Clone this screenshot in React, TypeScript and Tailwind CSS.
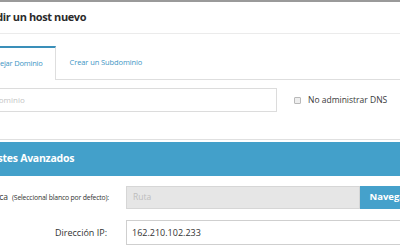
import React from 'react';

const font = { fontFamily: '"Open Sans", "Liberation Sans", sans-serif' };

export default function App() {
  return (
    <div className="w-[400px] h-[250px] overflow-hidden bg-white" style={font}>
      <div className="-ml-[40px] w-[480px] border-t-2 border-[#9a9a9a]">
        {/* Modal header */}
        <div className="h-[32px] flex items-center pl-[16px] border-b border-[#ebebeb]">
          <h1 className="text-[11px] font-bold text-[#2b2b2b] tracking-[-0.4px]">Añadir un host nuevo</h1>
        </div>

        {/* Tabs */}
        <div className="pt-[12px]">
          <div className="flex pl-[12px] border-b border-[#dedede] h-[34px]">
            <div className="-mb-px h-[34px] px-[12px] flex items-center bg-white border-x border-[#dedede] border-t-2 border-t-[#3a8fb9] text-[7.5px] tracking-[-0.2px] text-[#3d95c4]">
              Manejar Dominio
            </div>
            <div className="h-[33px] px-[14px] flex items-center text-[7.5px] tracking-[-0.1px] text-[#3d95c4]">
              Crear un Subdominio
            </div>
          </div>
        </div>

        {/* Domain row */}
        <div className="mt-[8px] flex items-center">
          <div className="ml-[20px] w-[297px] h-[24px] border border-[#dcdcdc] flex items-center pl-[12px] text-[8px] text-[#c4c4c4]">
            Dominio
          </div>
          <label className="ml-[17px] flex items-center gap-[7px] text-[8.5px] text-[#3a3a3a]">
            <span className="w-[7px] h-[7px] border border-[#b9b9b9] bg-[#eeeeee] rounded-[1px]" />
            No administrar DNS
          </label>
        </div>

        {/* Advanced settings */}
        <div className="mt-[27px] border-t border-[#e0e0e0] pt-[2px]">
          <div className="h-[34px] bg-[#43a0ca] flex items-center pl-[21px]">
            <h2 className="text-[10.5px] font-bold text-white tracking-tight">Ajustes Avanzados</h2>
          </div>
        </div>

        <div className="mt-[10px] flex items-center h-[23px]">
          <div className="w-[150px] flex justify-end items-baseline gap-[4px] text-[#333] whitespace-nowrap">
            <span className="text-[8.5px]">Ruta Física</span>
            <span className="text-[6.9px] tracking-[-0.2px]">(Seleccional blanco por defecto):</span>
          </div>
          <div className="ml-[17px] w-[236px] h-[23px] bg-[#e6e6e6] border border-[#d6d6d6] flex items-center px-[6px] text-[8.5px] text-[#bdbdbd]">
            Ruta
          </div>
          <button className="w-[80px] h-[23px] bg-[#45a1cb] text-white text-[9.5px] font-bold text-left pl-[9px]">
            Navegar
          </button>
        </div>

        <div className="mt-[11px] flex items-center h-[25px]">
          <div className="w-[148px] text-right text-[9px] text-[#333] whitespace-nowrap">Dirección IP:</div>
          <div className="ml-[19px] w-[316px] h-[25px] border border-[#cfcfcf] flex items-center px-[5px] text-[9px] text-[#333]">
            162.210.102.233
          </div>
        </div>
      </div>
    </div>
  );
}
